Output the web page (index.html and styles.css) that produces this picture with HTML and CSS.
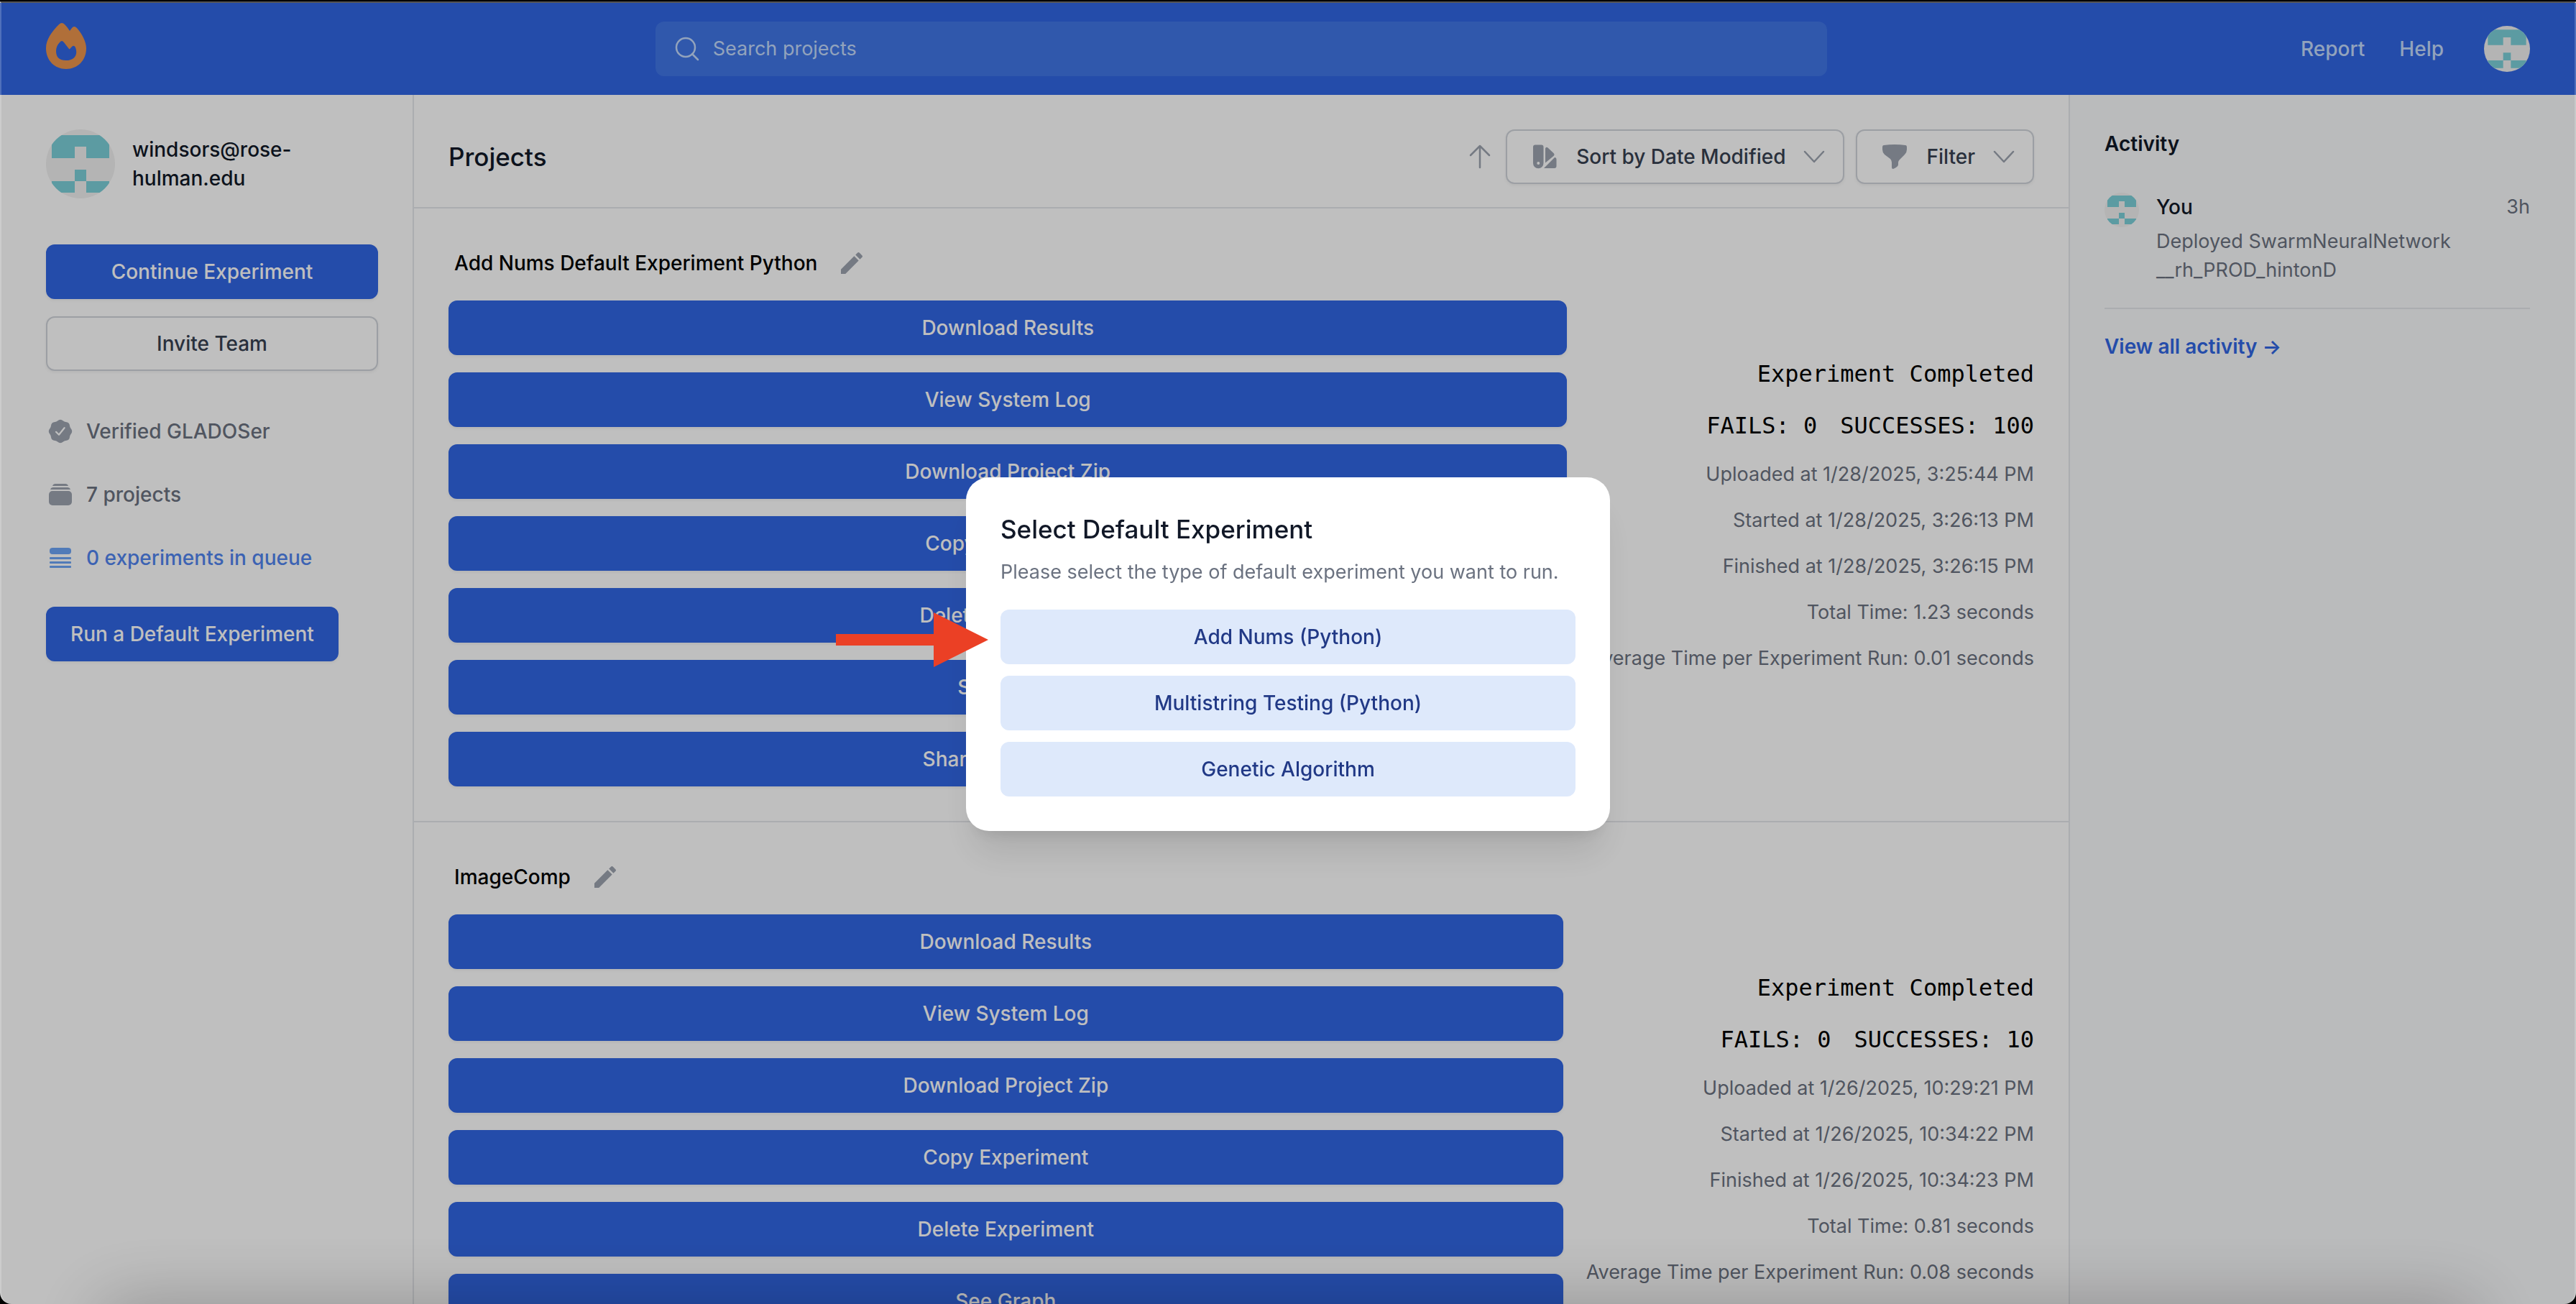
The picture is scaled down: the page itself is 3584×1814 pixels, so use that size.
FILE: index.html
```html
<!DOCTYPE html>
<html lang="en">
<head>
<meta charset="utf-8">
<title>GLADOS Dashboard</title>
<link rel="stylesheet" href="styles.css">
</head>
<body>
<svg class="sprite" aria-hidden="true">
  <symbol id="identicon" viewBox="0 0 420 420">
    <rect width="420" height="420" fill="#f0f0f0"/>
    <path fill="#7bcfd8" d="M35 35h350v140H245V105H175v70H35zM175 245h70v70h-70zM35 315h140v70H35zM245 315h140v70H245z"/>
  </symbol>
  <symbol id="chevron" viewBox="0 0 40 40">
    <path d="M7 13l13 14 13-14" fill="none" stroke="currentColor" stroke-width="2.500" stroke-linecap="round" stroke-linejoin="round"/>
  </symbol>
  <symbol id="pencil" viewBox="0 0 24 24">
    <path fill="currentColor" d="M3 17.25V21h3.75L17.81 9.94l-3.75-3.75L3 17.25zM20.71 7.04a1 1 0 0 0 0-1.41l-2.34-2.34a1 1 0 0 0-1.41 0l-1.83 1.83 3.75 3.75 1.83-1.83z"/>
  </symbol>
</svg>

<div class="page">
  <header class="topbar">
    <a class="logo" href="#" aria-label="Home">
      <svg viewBox="0 0 56 64"><path fill="#eb954d" fill-rule="evenodd" d="M18 2Q22-2 26 2Q30 6 33 11L36 7Q39 3 43 7C51 16 56 27 56 35C56 52 44 64 28 64S0 52 0 35C0 23 8 12 18 2zM19 27Q22 23 25 27L32 36Q33 37 34 35L36 33Q39 30 41 34C45 45 39 52 28 52S14 46 14 39C14 34 16 30 19 27z"/></svg>
    </a>
    <label class="search">
      <svg viewBox="0 0 40 40" fill="none" stroke="currentColor" stroke-width="2.500" stroke-linecap="round"><circle cx="18" cy="18" r="13"/><path d="M27 27l8 8"/></svg>
      <input type="search" placeholder="Search projects" aria-label="Search projects">
    </label>
    <nav class="topnav">
      <a href="#">Report</a>
      <a href="#">Help</a>
      <button class="avatar avatar-md" aria-label="Account"><svg><use href="#identicon"/></svg></button>
    </nav>
  </header>

  <div class="columns">
    <aside class="profile">
      <div class="user">
        <span class="avatar avatar-lg"><svg><use href="#identicon"/></svg></span>
        <span class="user-name">windsors@rose-<br>hulman.edu</span>
      </div>
      <div class="stack">
        <button class="btn btn-primary">Continue Experiment</button>
        <button class="btn btn-outline">Invite Team</button>
      </div>
      <ul class="facts">
        <li>
          <svg viewBox="0 0 20 20"><path fill="currentColor" fill-rule="evenodd" d="M6.267 3.455a3.066 3.066 0 001.745-.723 3.066 3.066 0 013.976 0 3.066 3.066 0 001.745.723 3.066 3.066 0 012.812 2.812c.051.643.304 1.254.723 1.745a3.066 3.066 0 010 3.976 3.066 3.066 0 00-.723 1.745 3.066 3.066 0 01-2.812 2.812 3.066 3.066 0 00-1.745.723 3.066 3.066 0 01-3.976 0 3.066 3.066 0 00-1.745-.723 3.066 3.066 0 01-2.812-2.812 3.066 3.066 0 00-.723-1.745 3.066 3.066 0 010-3.976 3.066 3.066 0 00.723-1.745 3.066 3.066 0 012.812-2.812z"/><path d="M7 10.4l2 2 3.800-4.800" fill="none" stroke="#fff" stroke-width="1.100" stroke-linecap="round" stroke-linejoin="round"/></svg>
          Verified GLADOSer
        </li>
        <li>
          <svg viewBox="0 0 40 40" fill="currentColor"><path d="M13 5h14q3 0 4 3H9q1-3 4-3zM10 10h20q3 0 4 3H6q1-3 4-3z"/><rect x="4" y="15" width="32" height="20" rx="5"/></svg>
          7 projects
        </li>
        <li class="queue">
          <svg viewBox="0 0 40 40" fill="currentColor"><rect x="5" y="6" width="30" height="9" rx="4"/><rect x="5" y="19" width="30" height="3" rx="1"/><rect x="5" y="25" width="30" height="3" rx="1"/><rect x="5" y="31" width="30" height="3" rx="1"/></svg>
          0 experiments in queue
        </li>
      </ul>
      <button class="btn btn-primary btn-fit">Run a Default Experiment</button>
    </aside>

    <main class="projects">
      <div class="projects-head">
        <h1>Projects</h1>
        <div class="tools">
          <button class="sort-dir" aria-label="Sort direction"><svg viewBox="0 0 40 40" fill="none" stroke="currentColor" stroke-width="2.500" stroke-linecap="round" stroke-linejoin="round"><path d="M20 35V5M7 18L20 5l13 13"/></svg></button>
          <button class="btn btn-outline btn-menu">
            <svg class="lead" viewBox="0 0 40 40" fill="currentColor"><path fill-rule="evenodd" d="M7 3.500h8.500q3 0 3 3V29a7.250 7.250 0 0 1-14.500 0V6.500q0-3 3-3zM11.300 27a2 2 0 1 0 0 4 2 2 0 0 0 0-4z"/><path d="M21 28.500V8.500q1-3 3.500-1l8 7.500q2 2 0 4zM34 21q2.500 0 2.500 3v9q0 3-3 3H19z"/></svg>
            Sort by Date Modified
            <svg class="caret"><use href="#chevron"/></svg>
          </button>
          <button class="btn btn-outline btn-menu">
            <svg class="lead" viewBox="0 0 40 40" fill="currentColor"><path d="M20 3q8 0 15 1 2 0 2 3v3q0 4-3 7l-7 7q-2 2-2 4v3q0 3-7 6-2 0-2-2V28q0-3-2-5l-8-6q-3-3-3-7V7q0-3 2-3 7-1 15-1z"/></svg>
            Filter
            <svg class="caret"><use href="#chevron"/></svg>
          </button>
        </div>
      </div>

      <section class="project">
        <div class="project-main">
          <h2>Add Nums Default Experiment Python <button class="edit" aria-label="Rename"><svg><use href="#pencil"/></svg></button></h2>
          <div class="stack">
            <button class="btn btn-primary">Download Results</button>
            <button class="btn btn-primary">View System Log</button>
            <button class="btn btn-primary">Download Project Zip</button>
            <button class="btn btn-primary">Copy Experiment</button>
            <button class="btn btn-primary">Delete Experiment</button>
            <button class="btn btn-primary">See Graph</button>
            <button class="btn btn-primary">Share Experiment</button>
          </div>
        </div>
        <div class="project-info">
          <p class="mono">Experiment Completed</p>
          <p class="mono counts"><span>FAILS: 0</span><span>SUCCESSES: 100</span></p>
          <p>Uploaded at 1/28/2025, 3:25:44 PM</p>
          <p>Started at 1/28/2025, 3:26:13 PM</p>
          <p>Finished at 1/28/2025, 3:26:15 PM</p>
          <p>Total Time: 1.23 seconds</p>
          <p>Average Time per Experiment Run: 0.01 seconds</p>
        </div>
      </section>

      <section class="project">
        <div class="project-main">
          <h2>ImageComp <button class="edit" aria-label="Rename"><svg><use href="#pencil"/></svg></button></h2>
          <div class="stack">
            <button class="btn btn-primary">Download Results</button>
            <button class="btn btn-primary">View System Log</button>
            <button class="btn btn-primary">Download Project Zip</button>
            <button class="btn btn-primary">Copy Experiment</button>
            <button class="btn btn-primary">Delete Experiment</button>
            <button class="btn btn-primary">See Graph</button>
            <button class="btn btn-primary">Share Experiment</button>
          </div>
        </div>
        <div class="project-info">
          <p class="mono">Experiment Completed</p>
          <p class="mono counts"><span>FAILS: 0</span><span>SUCCESSES: 10</span></p>
          <p>Uploaded at 1/26/2025, 10:29:21 PM</p>
          <p>Started at 1/26/2025, 10:34:22 PM</p>
          <p>Finished at 1/26/2025, 10:34:23 PM</p>
          <p>Total Time: 0.81 seconds</p>
          <p>Average Time per Experiment Run: 0.08 seconds</p>
        </div>
      </section>
    </main>

    <aside class="activity">
      <h2>Activity</h2>
      <div class="event">
        <span class="avatar avatar-sm"><svg><use href="#identicon"/></svg></span>
        <div class="event-body">
          <div class="event-head"><h3>You</h3><time>3h</time></div>
          <p>Deployed SwarmNeuralNetwork<br>__rh_PROD_hintonD</p>
        </div>
      </div>
      <a class="view-all" href="#">View all activity <span aria-hidden="true">→</span></a>
    </aside>
  </div>
</div>

<div class="backdrop">
  <div class="dialog" role="dialog" aria-labelledby="dialog-title">
    <h2 id="dialog-title">Select Default Experiment</h2>
    <p>Please select the type of default experiment you want to run.</p>
    <div class="choices">
      <button class="btn btn-soft">Add Nums (Python)</button>
      <button class="btn btn-soft">Multistring Testing (Python)</button>
      <button class="btn btn-soft">Genetic Algorithm</button>
    </div>
    <svg class="pointer" viewBox="0 0 212 76" aria-hidden="true"><path fill="#eb4025" d="M0 30h136V0l76 38-76 38V46H0z"/></svg>
  </div>
</div>
<div class="window-edge"></div>
</body>
</html>
```
FILE: styles.css
```css
*, *::before, *::after { box-sizing: border-box; }

html, body { height: 100%; }

body {
  margin: 0;
  overflow: hidden;
  background: #fff;
  color: #111827;
  font-family: Inter, "Liberation Sans", sans-serif;
  font-size: 28px;
  line-height: 40px;
}

h1, h2, h3, p, ul { margin: 0; padding: 0; }
h1, h2, h3 { font-size: inherit; font-weight: 500; }
p, time { font-size: 27px; }
ul { list-style: none; }
a { color: inherit; text-decoration: none; }
button, input { font: inherit; color: inherit; }
button { border: 0; padding: 0; background: none; cursor: pointer; }
svg { display: block; flex: none; }
.sprite { position: absolute; width: 0; height: 0; }

.page {
  display: flex;
  flex-direction: column;
  height: 100%;
  overflow: hidden;
  padding-top: 4px;
}

/* Top bar */
.topbar {
  display: grid;
  grid-template-columns: 52fr 100fr 60fr;
  align-items: center;
  flex: none;
  height: 128px;
  padding: 0 64px;
  background: #3166e3;
  color: #c3dafb;
}
.logo svg { width: 56px; height: 64px; margin-bottom: 8px; }
.search {
  display: flex;
  align-items: center;
  gap: 16px;
  height: 76px;
  padding: 0 24px;
  border-radius: 12px;
  background: #4176e6;
}
.search svg { width: 40px; height: 40px; }
.search input {
  flex: 1;
  min-width: 0;
  padding: 0;
  border: 0;
  outline: 0;
  background: none;
  font-size: 27px;
}
.search input::placeholder { color: #c3dafb; opacity: 1; }
.topnav {
  display: flex;
  align-items: center;
  justify-content: flex-end;
  gap: 48px;
  font-weight: 500;
}
.topnav .avatar { margin-left: 8px; }

.avatar { display: block; flex: none; border-radius: 50%; overflow: hidden; }
.avatar svg { width: 100%; height: 100%; }
.avatar-sm { width: 48px; height: 48px; }
.avatar-md { width: 64px; height: 64px; }
.avatar-lg { width: 96px; height: 96px; }

/* Buttons */
.btn {
  display: flex;
  align-items: center;
  justify-content: center;
  height: 76px;
  padding: 0 32px;
  border: 2px solid transparent;
  border-radius: 12px;
  font-weight: 500;
  white-space: nowrap;
}
.btn-primary {
  background: #3166e3;
  border-color: #3166e3;
  color: #fff;
  box-shadow: 0 2px 4px rgba(0, 0, 0, .06);
}
.btn-outline {
  background: #fff;
  border-color: #d1d5db;
  color: #374151;
  box-shadow: 0 2px 4px rgba(0, 0, 0, .06);
}
.btn-soft { background: #dee9fb; color: #213986; }
.btn-fit { align-self: flex-start; }
.stack { display: flex; flex-direction: column; gap: 24px; }

/* Columns */
.columns {
  display: grid;
  grid-template-columns: 576px minmax(0, 1fr) 706px;
  flex: 1;
  min-height: 0;
}

.profile {
  display: flex;
  flex-direction: column;
  padding: 48px 48px 48px 64px;
  border-right: 2px solid #e5e7eb;
}
.user { display: flex; align-items: center; gap: 24px; margin-bottom: 64px; }
.user-name { font-weight: 500; }
.facts {
  display: flex;
  flex-direction: column;
  gap: 48px;
  margin: 64px 0 48px;
  color: #6b7280;
  font-weight: 500;
}
.facts li { display: flex; align-items: center; gap: 16px; }
.facts svg { width: 40px; height: 40px; color: #9ca3af; }
.facts .queue { color: #5184ef; }
.facts .queue svg { color: #6da5f6; }

.projects-head {
  display: flex;
  align-items: center;
  justify-content: space-between;
  padding: 48px 48px 32px;
  border-bottom: 2px solid #e5e7eb;
}
.projects-head h1 { font-size: 35px; line-height: 56px; }
.tools { display: flex; align-items: center; gap: 16px; }
.sort-dir svg { width: 40px; height: 40px; color: #9ca3af; }
.btn-menu svg { width: 40px; height: 40px; color: #9ca3af; }
.btn-menu .lead { margin-right: 24px; }
.btn-menu .caret { margin: 0 -12px 0 20px; }

.project {
  display: flex;
  align-items: center;
  gap: 32px;
  padding: 48px;
  border-bottom: 2px solid #e5e7eb;
}
.project-main { flex: 1; min-width: 0; }
.project h2 {
  display: flex;
  align-items: center;
  gap: 28px;
  height: 56px;
  margin-bottom: 24px;
  padding-left: 8px;
  color: #000;
}
.edit svg { width: 40px; height: 40px; color: #9ca3af; }
.project-info {
  display: flex;
  flex-direction: column;
  align-items: flex-end;
  gap: 24px;
  color: #6b7280;
  white-space: nowrap;
}
.mono {
  color: #000;
  font-family: "DejaVu Sans Mono", monospace;
  font-size: 32px;
  line-height: 48px;
}
.counts { display: flex; gap: 32px; }

/* Activity */
.activity {
  padding: 48px 64px 48px 48px;
  border-left: 2px solid #e5e7eb;
  background: #f9fafb;
}
.activity h2 { font-weight: 600; }
.event {
  display: flex;
  gap: 24px;
  margin-top: 16px;
  padding: 32px 0;
  border-bottom: 2px solid #e5e7eb;
}
.event-body { flex: 1; color: #6b7280; }
.event-head { display: flex; justify-content: space-between; margin-bottom: 8px; }
.event-head h3 { color: #111827; }
.view-all { display: block; padding: 32px 0; color: #3166e3; font-weight: 600; }

/* Dialog */
.backdrop {
  position: fixed;
  inset: 0;
  display: grid;
  place-items: center;
  padding-top: 6px;
  overflow: hidden;
  background: rgba(0, 0, 0, .25);
}
.backdrop::after {
  content: "";
  position: absolute;
  top: 100%;
  left: 140px;
  right: 140px;
  height: 100px;
  box-shadow: 0 0 100px rgba(0, 0, 0, .25);
}
.dialog {
  position: relative;
  width: 896px;
  padding: 48px;
  border-radius: 32px;
  background: #fff;
  box-shadow: 0 40px 50px -10px rgba(0, 0, 0, .1), 0 16px 20px -12px rgba(0, 0, 0, .1);
}
.dialog h2 { font-size: 35px; line-height: 48px; }
.dialog p { margin: 16px 0 32px; color: #6b7280; white-space: nowrap; }
.choices { display: flex; flex-direction: column; gap: 16px; }
.pointer {
  position: absolute;
  left: -181px;
  top: 188px;
  width: 212px;
  height: 76px;
}

/* Window frame */
.window-edge {
  position: fixed;
  inset: 2px 0 0;
  border: 2px solid rgba(255, 255, 255, .2);
  border-top-color: #555;
  border-bottom: 0;
  border-radius: 0 0 16px 16px;
  box-shadow: 0 0 0 20px #000;
  pointer-events: none;
}
```
